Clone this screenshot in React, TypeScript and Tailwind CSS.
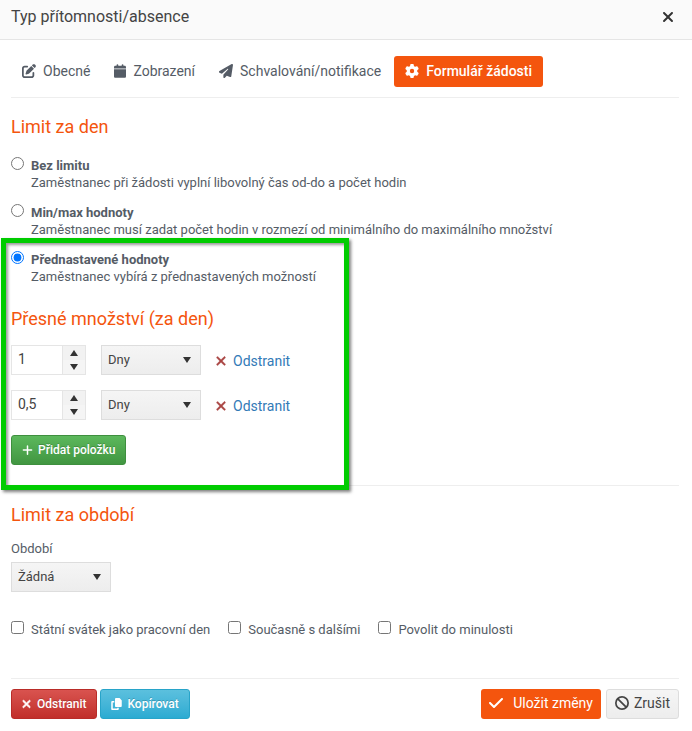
import React, { useState } from 'react';
import {
  FaBan,
  FaCalendar,
  FaCheck,
  FaCopy,
  FaGear,
  FaPaperPlane,
  FaPenToSquare,
  FaPlus,
  FaXmark,
} from 'react-icons/fa6';

const tabs = [
  { id: 'general', label: 'Obecné', icon: FaPenToSquare, iconClass: 'h-[14px] w-[14px]' },
  { id: 'display', label: 'Zobrazení', icon: FaCalendar, iconClass: 'h-[14px] w-3' },
  { id: 'approval', label: 'Schvalování/notifikace', icon: FaPaperPlane, iconClass: 'h-[14px] w-[14px]' },
  { id: 'form', label: 'Formulář žádosti', icon: FaGear, iconClass: 'h-[14px] w-[14px]' },
];

const flags = ['Státní svátek jako pracovní den', 'Současně s dalšími', 'Povolit do minulosti'];

const Heading: React.FC<{ children: React.ReactNode }> = ({ children }) => (
  <h2 className="text-lg leading-6 text-[#f4550e]">{children}</h2>
);

const Divider: React.FC = () => <hr className="border-t border-[#eeeeee]" />;

const LimitOption: React.FC<{
  value: string;
  title: string;
  description: string;
  selected: string;
  onSelect: (value: string) => void;
}> = ({ value, title, description, selected, onSelect }) => (
  <label className="flex items-start gap-[7px]">
    <input
      type="radio"
      name="day-limit"
      value={value}
      checked={selected === value}
      onChange={() => onSelect(value)}
      className="h-[13px] w-[13px] shrink-0"
    />
    <span className="text-[13px] leading-[17px]">
      <b className="block font-bold">{title}</b>
      <span className="block">{description}</span>
    </span>
  </label>
);

const Dropdown: React.FC<{ id: string; label?: string; options: string[] }> = ({ id, label, options }) => (
  <div className="relative w-[100px]">
    <select
      id={id}
      aria-label={label}
      className="h-[30px] w-full appearance-none border border-[#dddddd] bg-linear-to-b from-[#f5f5f5] to-[#ededed] px-1.5 text-[13px] text-[#444444]"
    >
      {options.map((option) => (
        <option key={option}>{option}</option>
      ))}
    </select>
    <svg viewBox="0 0 8 6" className="pointer-events-none absolute top-3 right-2.5 h-1.5 w-2 fill-[#333333]">
      <path d="M0 0h8L4 6z" />
    </svg>
  </div>
);

const AmountRow: React.FC<{ id: number; amount: string; onRemove: () => void }> = ({ id, amount, onRemove }) => (
  <div className="flex items-center">
    <div className="flex h-[30px] w-[75px] border border-[#e5e5e5]">
      <input
        type="text"
        aria-label="Množství"
        defaultValue={amount}
        className="w-full min-w-0 bg-white px-1.5 pb-0.5 text-sm text-[#444444]"
      />
      <div className="flex w-[23px] shrink-0 flex-col border-l border-[#e5e5e5] bg-[#f5f5f5]">
        <button type="button" aria-label="Zvýšit" className="flex flex-1 items-center justify-center bg-[#f2f2f2]">
          <svg viewBox="0 0 8 6" className="h-1.5 w-2 fill-[#333333]">
            <path d="M0 6h8L4 0z" />
          </svg>
        </button>
        <button type="button" aria-label="Snížit" className="flex flex-1 items-center justify-center">
          <svg viewBox="0 0 8 6" className="h-1.5 w-2 fill-[#333333]">
            <path d="M0 0h8L4 6z" />
          </svg>
        </button>
      </div>
    </div>
    <div className="ml-[15px]">
      <Dropdown id={`unit-${id}`} label="Jednotka" options={['Dny', 'Hodiny']} />
    </div>
    <a
      href="#"
      onClick={(e) => {
        e.preventDefault();
        onRemove();
      }}
      className="ml-[14px] flex items-center gap-1.5 pt-0.5 text-sm leading-5 text-[#337ab7]"
    >
      <FaXmark className="h-[14px] w-3 text-[#a94442]" strokeWidth={16} stroke="currentColor" />
      Odstranit
    </a>
  </div>
);

export default function App() {
  const [tab, setTab] = useState('form');
  const [limit, setLimit] = useState('preset');
  const [amounts, setAmounts] = useState([
    { id: 1, amount: '1' },
    { id: 2, amount: '0,5' },
  ]);

  return (
    <div className="min-h-screen bg-white font-['Roboto',sans-serif] text-[#555c66]">
      <header className="flex items-center justify-between border-b border-[#e5e5e5] bg-[#fafafa] pt-[5px] pr-[17px] pb-2.5 pl-[11px]">
        <h1 className="text-base leading-6 text-[#444444]">Typ přítomnosti/absence</h1>
        <button type="button" aria-label="Zavřít" className="text-[#333333]">
          <FaXmark className="h-4 w-[14px]" />
        </button>
      </header>

      <main className="pt-4 pr-[13px] pb-3 pl-[11px]">
        <nav className="mb-2.5 flex gap-0.5">
          {tabs.map(({ id, label, icon: Icon, iconClass }) => (
            <button
              key={id}
              type="button"
              onClick={() => setTab(id)}
              className={
                tab === id
                  ? 'flex h-[31px] items-center gap-[7px] rounded-[3px] bg-[#f4550e] px-[11px] pb-px text-sm font-medium text-white'
                  : 'flex h-[31px] items-center gap-[7px] rounded-[3px] px-[11px] pb-px text-sm'
              }
            >
              <Icon className={iconClass} />
              {label}
            </button>
          ))}
        </nav>
        <Divider />

        <section className="pt-[17px]">
          <Heading>Limit za den</Heading>
          <div className="mt-[18px] flex flex-col gap-[13px]">
            <LimitOption
              value="none"
              title="Bez limitu"
              description="Zaměstnanec při žádosti vyplní libovolný čas od-do a počet hodin"
              selected={limit}
              onSelect={setLimit}
            />
            <LimitOption
              value="range"
              title="Min/max hodnoty"
              description="Zaměstnanec musí zadat počet hodin v rozmezí od minimálního do maximálního množství"
              selected={limit}
              onSelect={setLimit}
            />
          </div>

          <div className="relative mt-[13px] pb-5">
            {/* highlight frame around the preset values */}
            <div className="pointer-events-none absolute -top-[13px] -bottom-[5px] -left-2.5 w-[348px] border-5 border-[#00cc00] shadow-[2px_2px_3px_rgba(0,0,0,0.5),inset_2px_2px_3px_rgba(0,0,0,0.4)]" />
            <LimitOption
              value="preset"
              title="Přednastavené hodnoty"
              description="Zaměstnanec vybírá z přednastavených možností"
              selected={limit}
              onSelect={setLimit}
            />
            <div className="mt-[22px]">
              <Heading>Přesné množství (za den)</Heading>
            </div>
            <div className="mt-[14px] flex flex-col items-start gap-[15px]">
              {amounts.map((row) => (
                <AmountRow
                  key={row.id}
                  id={row.id}
                  amount={row.amount}
                  onRemove={() => setAmounts(amounts.filter((a) => a.id !== row.id))}
                />
              ))}
              <button
                type="button"
                onClick={() => setAmounts([...amounts, { id: Date.now(), amount: '1' }])}
                className="flex h-[30px] items-center gap-[5px] rounded-[3px] border border-[#3e8f3e] bg-linear-to-b from-[#5cb85c] to-[#419641] px-2.5 text-xs font-medium text-white text-shadow-[0_-1px_0_rgba(0,0,0,0.2)]"
              >
                <FaPlus className="h-3 w-[11px]" />
                Přidat položku
              </button>
            </div>
          </div>
        </section>
        <Divider />

        <section className="pt-[17px]">
          <Heading>Limit za období</Heading>
          <label htmlFor="period" className="mt-[13px] mb-1 block text-[13px] leading-[18px]">
            Období
          </label>
          <Dropdown id="period" options={['Žádná', 'Měsíc', 'Rok']} />
          <div className="mt-[29px] mb-10 flex flex-wrap gap-[18px]">
            {flags.map((flag) => (
              <label key={flag} className="flex items-start gap-[7px] text-[13px] leading-[17px]">
                <input type="checkbox" className="h-[13px] w-[13px] shrink-0" />
                {flag}
              </label>
            ))}
          </div>
        </section>
        <Divider />

        <footer className="mt-2.5 flex items-center justify-between">
          <div className="flex gap-[3px]">
            <button
              type="button"
              className="flex h-[30px] items-center gap-1.5 rounded-[3px] border border-[#b92c28] bg-linear-to-b from-[#d9534f] to-[#c12e2a] px-2.5 text-xs font-medium text-white text-shadow-[0_-1px_0_rgba(0,0,0,0.2)]"
            >
              <FaXmark className="h-[14px] w-[9px]" strokeWidth={30} stroke="currentColor" />
              Odstranit
            </button>
            <button
              type="button"
              className="flex h-[30px] items-center gap-[5px] rounded-[3px] border border-[#28a4c9] bg-linear-to-b from-[#5bc0de] to-[#2aabd2] px-2.5 text-xs font-medium text-white text-shadow-[0_-1px_0_rgba(0,0,0,0.2)]"
            >
              <FaCopy className="h-3 w-[11px]" />
              Kopírovat
            </button>
          </div>
          <div className="flex gap-[5px]">
            <button
              type="button"
              className="flex h-[30px] items-center gap-2.5 rounded-[3px] bg-[#f4550e] px-2 pb-0.5 text-sm text-white"
            >
              <FaCheck className="h-4 w-[14px]" />
              Uložit změny
            </button>
            <button
              type="button"
              className="flex h-[30px] items-center gap-[5px] rounded-[3px] border border-[#dddddd] bg-linear-to-b from-[#f5f5f5] to-[#ededed] px-2 pb-0.5 text-sm text-[#444444]"
            >
              <FaBan className="h-[14px] w-[14px]" />
              Zrušit
            </button>
          </div>
        </footer>
      </main>
    </div>
  );
}
